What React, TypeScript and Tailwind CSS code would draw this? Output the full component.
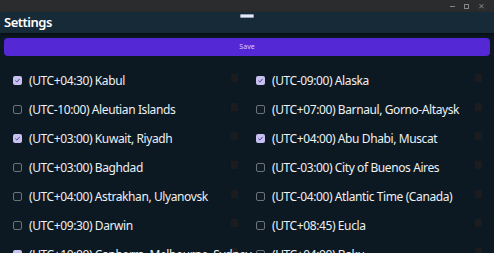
const zones: [string, boolean][][] = [
  [
    ["(UTC+04:30) Kabul", true],
    ["(UTC-09:00) Alaska", true],
  ],
  [
    ["(UTC-10:00) Aleutian Islands", false],
    ["(UTC+07:00) Barnaul, Gorno-Altaysk", false],
  ],
  [
    ["(UTC+03:00) Kuwait, Riyadh", true],
    ["(UTC+04:00) Abu Dhabi, Muscat", true],
  ],
  [
    ["(UTC+03:00) Baghdad", false],
    ["(UTC-03:00) City of Buenos Aires", false],
  ],
  [
    ["(UTC+04:00) Astrakhan, Ulyanovsk", false],
    ["(UTC-04:00) Atlantic Time (Canada)", false],
  ],
  [
    ["(UTC+09:30) Darwin", false],
    ["(UTC+08:45) Eucla", false],
  ],
  [
    ["(UTC+10:00) Canberra, Melbourne, Sydney", true],
    ["(UTC+04:00) Baku", false],
  ],
]

function Check({ on }: { on: boolean }) {
  if (on) {
    return (
      <span className="flex h-[9px] w-[9px] shrink-0 items-center justify-center rounded-[2px] bg-[#c8c0ee]">
        <svg viewBox="0 0 10 10" className="h-[7px] w-[7px]">
          <path d="M2 5.2 L4.1 7.2 L8 2.8" fill="none" stroke="#4a3d8a" strokeWidth="1.4" />
        </svg>
      </span>
    )
  }
  return <span className="h-[9px] w-[9px] shrink-0 rounded-[2px] border border-[#6b7378] bg-[#0f1c25]" />
}

function Cell({ label, on }: { label: string; on: boolean }) {
  return (
    <div className="relative flex h-[29px] min-w-0 items-center pl-[13px]">
      <span className="absolute right-[5px] top-[8px] h-[8px] w-[7px] rounded-[1px] bg-[#1c1b1d]" />
      <Check on={on} />
      <span className="relative ml-[7px] whitespace-nowrap text-[12px] tracking-[-0.4px] text-[#eef0f2]">
        {label}
      </span>
    </div>
  )
}

export default function App() {
  return (
    <div
      className="flex h-[253px] w-[494px] flex-col overflow-hidden bg-[#0c1923]"
      style={{ fontFamily: '"Noto Sans", "Open Sans", sans-serif' }}
    >
      <div className="flex h-[12px] shrink-0 items-center justify-end gap-[9px] bg-[#2b2c2e] pr-[9px] text-[#7a7c80]">
        <span className="h-px w-[5px] bg-[#85878a]" />
        <span className="h-[5px] w-[5px] border border-[#85878a]" />
        <span className="text-[8px] leading-none">✕</span>
      </div>
      <div className="relative flex h-[21px] shrink-0 items-center bg-[#172a37] px-[4px] shadow-[0_2px_3px_rgba(0,0,0,0.45)]">
        <span className="text-[13px] font-semibold tracking-[-0.5px] text-white">Settings</span>
        <span className="absolute left-[240px] top-[2px] h-[4px] w-[14px] rounded-[1px] border border-[#9aa0b8] bg-[#e8eaf2]" />
      </div>
      <div className="px-[4px] pt-[5px]">
        <button className="flex h-[18px] w-full items-center justify-center rounded-[4px] bg-[#5428d4] text-[7px] text-[#d8ccff]">
          Save
        </button>
      </div>
      <div className="mt-[10px] flex flex-col">
        {zones.map((row, i) => (
          <div key={i} className="grid grid-cols-[243px_244px]">
            <Cell label={row[0][0]} on={row[0][1]} />
            <Cell label={row[1][0]} on={row[1][1]} />
          </div>
        ))}
      </div>
    </div>
  )
}
